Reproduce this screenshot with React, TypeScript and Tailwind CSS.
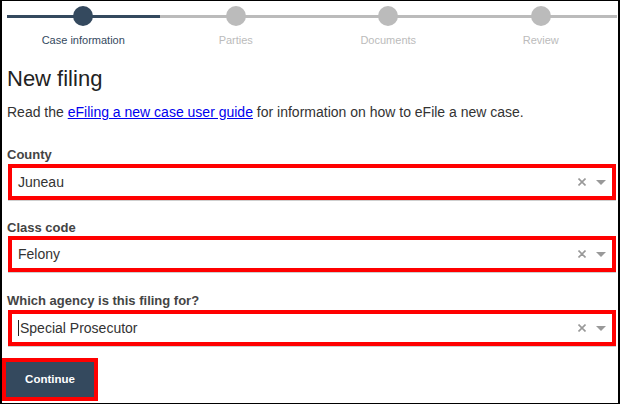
import React from "react";

const steps = [
  { label: "Case information", active: true },
  { label: "Parties", active: false },
  { label: "Documents", active: false },
  { label: "Review", active: false },
];

function SelectBox({ value, cursor }: { value: string; cursor?: boolean }) {
  return (
    <div className="ml-[6px] w-[608px] h-[36px] border-4 border-[#ff0000] bg-white flex items-center shadow-[0_1px_0_#cfcfcf]">
      <div className="flex-1 flex items-center pl-[6px] text-[14px] text-[#333]">
        {cursor && <span className="inline-block w-px h-[16px] bg-[#222] mr-px" />}
        <span>{value}</span>
      </div>
      <svg width="8" height="8" viewBox="0 0 8 8" className="mr-[10px]">
        <path d="M0.5 0.5 L7.5 7.5 M7.5 0.5 L0.5 7.5" stroke="#999" strokeWidth="1.6" />
      </svg>
      <svg width="10" height="5" viewBox="0 0 10 5" className="mr-[6px]">
        <polygon points="0,0 10,0 5,5" fill="#999" />
      </svg>
    </div>
  );
}

export default function App() {
  return (
    <div className="w-[620px] h-[405px] bg-white font-['Liberation_Sans',Arial,sans-serif]">
      <div className="h-[404px] border-l-2 border-r-2 border-t border-b border-black">
        {/* Stepper */}
        <div className="ml-[5px] w-[610px] pt-[5px] grid grid-cols-4">
          {steps.map((s, i) => (
            <div key={i} className="flex flex-col items-center">
              <div className="relative w-full h-[20px] flex justify-center">
                <div
                  className={
                    "absolute left-0 right-0 top-[9px] h-[3px] " +
                    (s.active ? "bg-[#34495e]" : "bg-[#bbbbbb]")
                  }
                />
                <div
                  className={
                    "relative w-[20px] h-[20px] rounded-full " +
                    (s.active ? "bg-[#34495e]" : "bg-[#bbbbbb]")
                  }
                />
              </div>
              <div
                className={
                  "mt-[7px] text-[11px] leading-[14px] " +
                  (s.active ? "text-[#34495e]" : "text-[#bbbbbb]")
                }
              >
                {s.label}
              </div>
            </div>
          ))}
        </div>

        <h1 className="pl-[5px] mt-[19px] text-[22px] leading-[26px] text-[#222]">New filing</h1>
        <p className="pl-[5px] mt-[10px] text-[14px] leading-[20px] text-[#333]">
          Read the{" "}
          <a href="#" className="text-[#0000ee] underline">
            eFiling a new case user guide
          </a>{" "}
          for information on how to eFile a new case.
        </p>

        <div className="pl-[5px] mt-[24px] text-[13px] leading-[17px] font-bold text-[#444]">County</div>
        <div className="mt-[1px]">
          <SelectBox value="Juneau" />
        </div>

        <div className="pl-[5px] mt-[19px] text-[13px] leading-[17px] font-bold text-[#444]">Class code</div>
        <div className="mt-0">
          <SelectBox value="Felony" />
        </div>

        <div className="pl-[5px] mt-[20px] text-[13px] leading-[17px] font-bold text-[#444]">
          Which agency is this filing for?
        </div>
        <div className="mt-[1px]">
          <SelectBox value="Special Prosecutor" cursor />
        </div>

        <div className="mt-[12px]">
          <button className="w-[96px] h-[43px] border-4 border-[#ff0000] bg-[#34495e] text-white text-[11.5px] font-bold flex items-center justify-center">
            Continue
          </button>
        </div>
      </div>
    </div>
  );
}
